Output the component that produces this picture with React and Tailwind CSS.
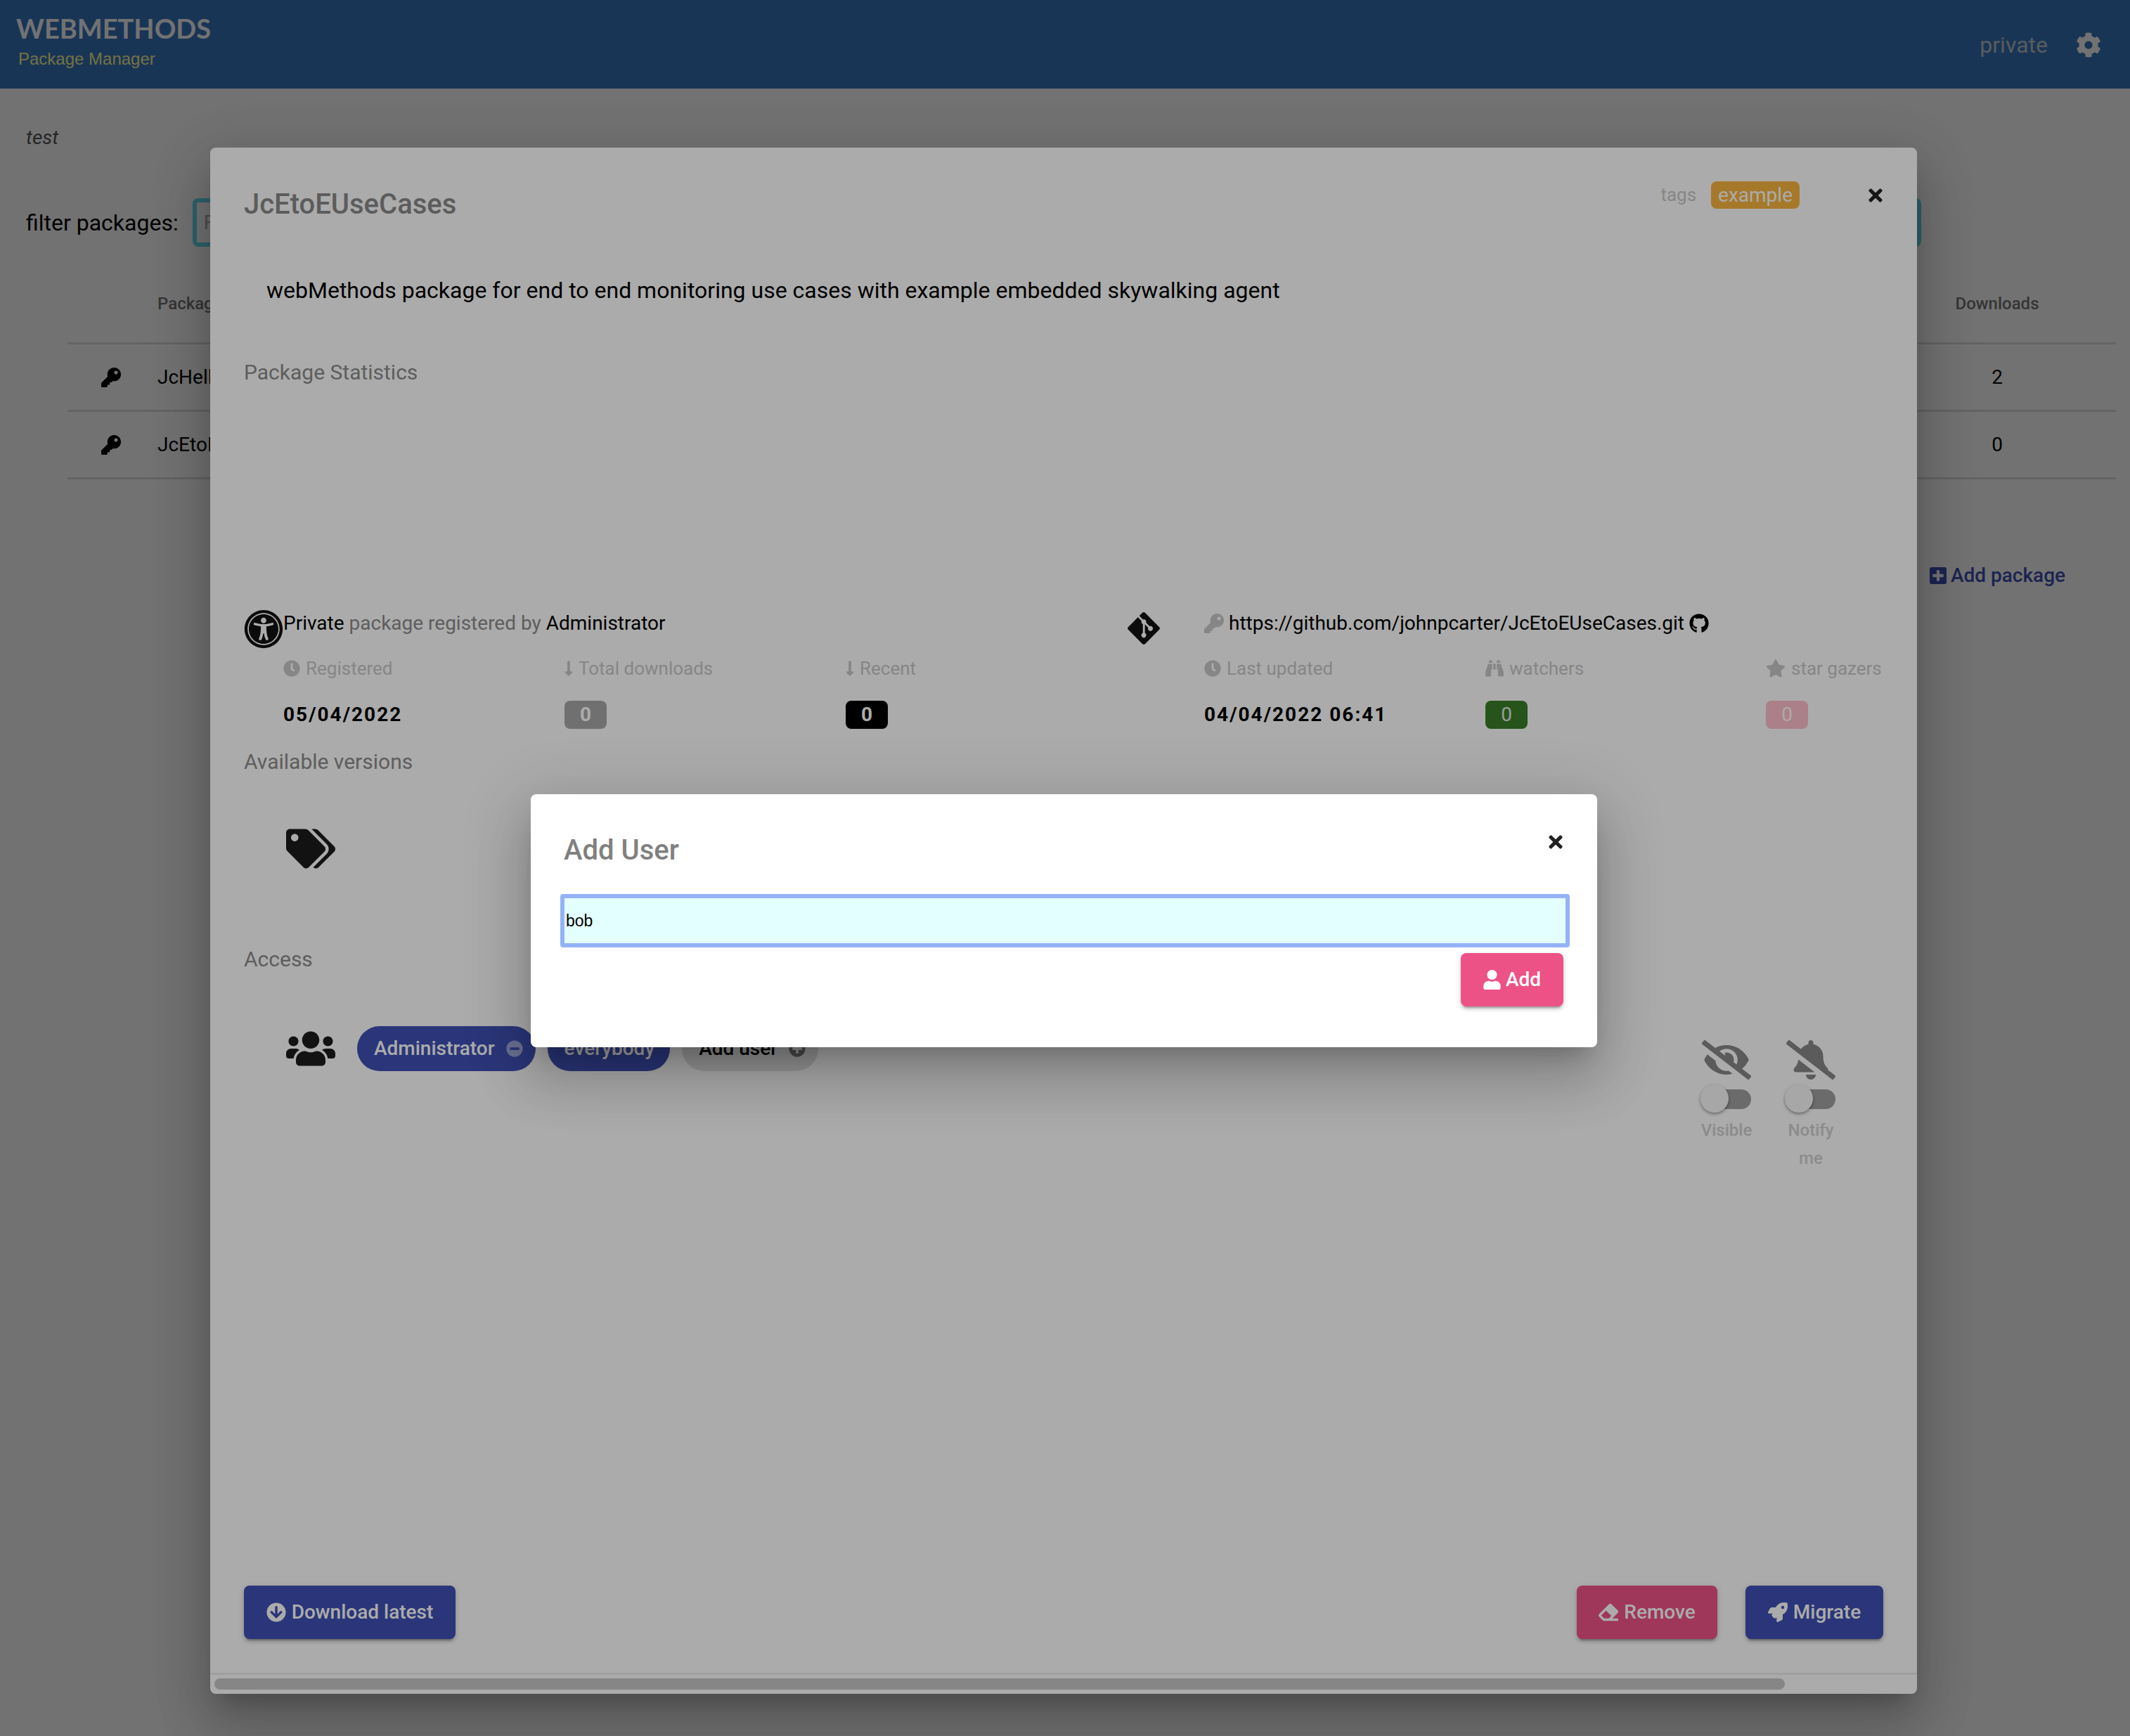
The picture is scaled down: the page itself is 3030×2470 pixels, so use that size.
import React from 'react';
import {
  FaArrowCircleDown,
  FaBellSlash,
  FaBinoculars,
  FaClock,
  FaCog,
  FaEraser,
  FaEyeSlash,
  FaGitAlt,
  FaGithub,
  FaKey,
  FaLongArrowAltDown,
  FaMinusCircle,
  FaPlusCircle,
  FaPlusSquare,
  FaRocket,
  FaStar,
  FaTags,
  FaTimes,
  FaUniversalAccess,
  FaUser,
  FaUsers,
} from 'react-icons/fa';

const dialogShadow =
  'shadow-[0_22px_30px_-14px_rgba(0,0,0,0.2),0_48px_76px_6px_rgba(0,0,0,0.14),0_18px_92px_16px_rgba(0,0,0,0.12)]';
const buttonShadow =
  'shadow-[0_6px_2px_-4px_rgba(0,0,0,0.2),0_4px_4px_0_rgba(0,0,0,0.14),0_2px_10px_0_rgba(0,0,0,0.12)]';

const PackageRow = ({ name, downloads }) => (
  <div className="flex h-[96px] items-center border-b-[3px] border-[#dedede] text-[28px] text-black">
    <div className="w-[128px] pl-[48px]">
      <FaKey className="h-[28px] w-[28px]" />
    </div>
    <div className="flex-1">{name}</div>
    <div className="w-[338px] text-center">{downloads}</div>
  </div>
);

const StatLabel = ({ icon: Icon, iconClass, children }) => (
  <div className="flex h-[40px] items-center gap-[8px] text-[26px] text-[#c8c8c8]">
    <Icon className={iconClass} />
    <span>{children}</span>
  </div>
);

const CountBadge = ({ color, children }) => (
  <div className={`flex h-[40px] w-[60px] items-center justify-center rounded-[8px] text-[28px] font-bold ${color}`}>
    {children}
  </div>
);

const Chip = ({ color, icon: Icon, iconClass, children }) => (
  <div className={`flex h-[64px] items-center gap-[16px] rounded-[32px] pl-[24px] ${Icon ? 'pr-[18px]' : 'pr-[22px]'} text-[28px] font-medium ${color}`}>
    <span>{children}</span>
    {Icon && <Icon className={iconClass} />}
  </div>
);

const Toggle = ({ icon: Icon, label }) => (
  <div className="flex w-[80px] flex-col items-center text-center text-[24px] font-medium leading-[40px] text-[#d0d0d0]">
    <Icon className="h-[56px] w-[70px] text-[#888888]" />
    <div className="relative mt-[14px] h-[28px] w-[70px] rounded-[14px] bg-[#a0a0a0]">
      <div className="absolute left-[-2px] top-[-7px] h-[40px] w-[40px] rounded-full bg-[#fafafa] shadow-[0_2px_4px_rgba(0,0,0,0.4)]" />
    </div>
    <div className="mt-[10px]">{label}</div>
  </div>
);

const ActionButton = ({ color, width, icon: Icon, children }) => (
  <button className={`flex h-[76px] items-center justify-center gap-[8px] rounded-[8px] text-[28px] font-medium text-white ${color} ${width} ${buttonShadow}`}>
    <Icon className="h-[28px] w-[28px]" />
    {children}
  </button>
);

const App = () => {
  return (
    <div className="relative h-[2470px] w-[3030px] overflow-hidden bg-white font-['Roboto',sans-serif]">
      {/* Page behind the dialogs */}
      <header className="flex h-[126px] items-start justify-between bg-[#3a78bf] pl-[23px] pr-[41px] pt-[18px]">
        <div className="flex flex-col">
          <div className="font-['Lato',sans-serif] text-[38px] font-bold leading-[44px] text-white">WEBMETHODS</div>
          <div className="mt-[6px] pl-[3px] font-['Liberation_Sans',sans-serif] text-[24px] leading-[32px] text-[#fffd9a]">Package Manager</div>
        </div>
        <div className="mt-[26px] flex items-center gap-[40px]">
          <span className="text-[32px] leading-[40px] text-[#c4ccd4]">private</span>
          <FaCog className="h-[36px] w-[36px] text-white" />
        </div>
      </header>
      <main className="pl-[37px]">
        <div className="mt-[50px] text-[28px] italic leading-[40px] text-[#555555]">test</div>
        <div className="mt-[66px] flex h-[69px] items-center gap-[20px]">
          <span className="text-[32px] text-black">filter packages:</span>
          <input
            readOnly
            placeholder="Filter"
            className="h-[69px] w-[2459px] rounded-[8px] border-[6px] border-[#64dcf0] px-[10px] text-[28px] outline-none placeholder:text-[#aaaaaa]"
          />
        </div>
        <div className="ml-[59px] mr-[20px]">
          <div className="flex h-[139px] items-center border-b-[3px] border-[#dedede] pt-[26px] text-[24px] font-medium text-[#777777]">
            <div className="w-[128px]" />
            <div className="flex-1">Package</div>
            <div className="w-[338px] text-center">Downloads</div>
          </div>
          <PackageRow name="JcHelloWorld" downloads="2" />
          <PackageRow name="JcEtoEUseCases" downloads="0" />
          <div className="mt-[116px] flex items-center justify-end gap-[6px] pr-[72px] text-[28px] font-medium text-[#3f51b5]">
            <FaPlusSquare className="h-[28px] w-[24px]" />
            <span>Add package</span>
          </div>
        </div>
      </main>

      <div className="absolute inset-0 bg-[rgba(0,0,0,0.33)]" />

      {/* Package dialog */}
      <section className={`absolute left-[299px] top-[210px] flex h-[2200px] w-[2428px] flex-col rounded-[8px] bg-white ${dialogShadow}`}>
        <div className="flex-1 px-[48px] pt-[48px]">
          <div className="flex items-start justify-between">
            <h2 className="pt-[2px] text-[40px] font-medium leading-[62px] text-[#8a8a8a]">JcEtoEUseCases</h2>
            <div className="flex h-[39px] items-center">
              <span className="text-[26px] text-[#c8c8c8]">tags</span>
              <span className="ml-[21px] rounded-[8px] bg-[#f8b53f] px-[10px] text-[28px] leading-[39px] text-white">example</span>
              <FaTimes className="ml-[97px] h-[28px] w-[22px] text-[#222222]" />
            </div>
          </div>
          <p className="mt-[67px] pl-[32px] text-[32px] leading-[48px] text-black">
            webMethods package for end to end monitoring use cases with example embedded skywalking agent
          </p>
          <h3 className="mt-[69px] text-[30px] leading-[48px] text-[#8c8c8c]">Package Statistics</h3>

          <div className="mt-[313px] grid grid-cols-[1256px_1fr]">
            <div className="flex">
              <FaUniversalAccess className="h-[56px] w-[56px] shrink-0 text-[#111111]" />
              <div className="flex-1">
                <div className="flex h-[40px] items-center text-[28px] text-black">
                  Private&nbsp;<span className="text-[#8c8c8c]">package registered by</span>&nbsp;Administrator
                </div>
                <div className="mt-[24px] grid grid-cols-3">
                  <StatLabel icon={FaClock} iconClass="h-[24px] w-[24px]">Registered</StatLabel>
                  <StatLabel icon={FaLongArrowAltDown} iconClass="h-[28px] w-[12px]">Total downloads</StatLabel>
                  <StatLabel icon={FaLongArrowAltDown} iconClass="h-[28px] w-[12px]">Recent</StatLabel>
                </div>
                <div className="mt-[25px] grid grid-cols-3 items-center">
                  <div className="text-[28px] font-bold tracking-[2px] text-black">05/04/2022</div>
                  <CountBadge color="bg-[#a8a8a8] text-white">0</CountBadge>
                  <CountBadge color="bg-black text-white">0</CountBadge>
                </div>
              </div>
            </div>
            <div className="flex">
              <FaGitAlt className="-ml-[2px] mt-[1px] h-[52px] w-[52px] shrink-0 text-[#111111]" />
              <div className="ml-[60px] flex-1">
                <div className="flex h-[40px] items-center gap-[7px] text-[28px] text-black">
                  <FaKey className="h-[28px] w-[28px] text-[#c8c8c8]" />
                  <span>https://github.com/johnpcarter/JcEtoEUseCases.git</span>
                  <FaGithub className="h-[28px] w-[28px]" />
                </div>
                <div className="mt-[24px] grid grid-cols-[400px_399px_1fr]">
                  <StatLabel icon={FaClock} iconClass="h-[24px] w-[24px]">Last updated</StatLabel>
                  <StatLabel icon={FaBinoculars} iconClass="h-[26px] w-[26px]">watchers</StatLabel>
                  <StatLabel icon={FaStar} iconClass="h-[26px] w-[28px]">star gazers</StatLabel>
                </div>
                <div className="mt-[25px] grid grid-cols-[400px_399px_1fr] items-center">
                  <div className="text-[28px] font-bold tracking-[2px] text-black">04/04/2022 06:41</div>
                  <CountBadge color="bg-[#397e27] text-[#e8e8e8] !font-normal">0</CountBadge>
                  <CountBadge color="bg-[#ffbfcb] text-[#ffffff] !font-normal">0</CountBadge>
                </div>
              </div>
            </div>
          </div>

          <h3 className="mt-[22px] text-[30px] leading-[48px] text-[#8c8c8c]">Available versions</h3>
          <div className="mt-[71px] pl-[60px]">
            <FaTags className="h-[57px] w-[70px] text-[#1c1c1c]" />
          </div>
          <h3 className="mt-[105px] text-[30px] leading-[48px] text-[#8c8c8c]">Access</h3>

          <div className="mt-[71px] flex items-start pl-[60px] pr-[63px]">
            <FaUsers className="mt-[4px] h-[56px] w-[70px] text-[#1c1c1c]" />
            <div className="ml-[31px] flex gap-[17px]">
              <Chip color="bg-[#3f51b5] text-white" icon={FaMinusCircle} iconClass="h-[24px] w-[24px] text-white/50">Administrator</Chip>
              <Chip color="bg-[#3f51b5] text-white">everybody</Chip>
              <Chip color="bg-[#e0e0e0] text-black" icon={FaPlusCircle} iconClass="h-[24px] w-[24px] text-black/50">Add user</Chip>
            </div>
            <div className="ml-auto mt-[20px] flex gap-[40px]">
              <Toggle icon={FaEyeSlash} label="Visible" />
              <Toggle icon={FaBellSlash} label="Notify me" />
            </div>
          </div>
        </div>

        <div className="flex justify-between px-[48px] pb-[48px]">
          <ActionButton color="bg-[#3f51b5]" width="w-[301px]" icon={FaArrowCircleDown}>Download latest</ActionButton>
          <div className="flex gap-[40px]">
            <ActionButton color="bg-[#ed5286]" width="w-[200px]" icon={FaEraser}>Remove</ActionButton>
            <ActionButton color="bg-[#3f51b5]" width="w-[196px]" icon={FaRocket}>Migrate</ActionButton>
          </div>
        </div>
        <div className="h-[30px] border-t-[3px] border-[#eeeeee] pl-[6px] pt-[5px]">
          <div className="h-[16px] w-[2234px] rounded-[8px] bg-[#c8c8c8]" />
        </div>
      </section>

      <div className="absolute inset-0 bg-[rgba(0,0,0,0.33)]" />

      {/* Add user dialog */}
      <section className={`absolute left-[755px] top-[1130px] h-[360px] w-[1517px] rounded-[8px] bg-white px-[42px] pt-[47px] ${dialogShadow}`}>
        <div className="flex items-start justify-between pl-[5px] pr-[6px]">
          <h2 className="pt-[2px] text-[40px] font-medium leading-[62px] text-[#808080]">Add User</h2>
          <FaTimes className="mt-[7px] h-[28px] w-[22px] text-[#222222]" />
        </div>
        <input
          readOnly
          value="bob"
          className="mt-[31px] block h-[76px] w-[1436px] rounded-[4px] border-[6px] border-[#94b3f6] bg-[#e3ffff] px-[2px] font-['Liberation_Sans',sans-serif] text-[23px] text-black outline-none"
        />
        <div className="mt-[8px] flex justify-end pr-[6px]">
          <button className={`flex h-[76px] w-[146px] items-center justify-center gap-[7px] rounded-[8px] bg-[#ed5286] text-[28px] font-medium text-white ${buttonShadow}`}>
            <FaUser className="h-[28px] w-[25px]" />
            Add
          </button>
        </div>
      </section>
    </div>
  );
};

export default App;
